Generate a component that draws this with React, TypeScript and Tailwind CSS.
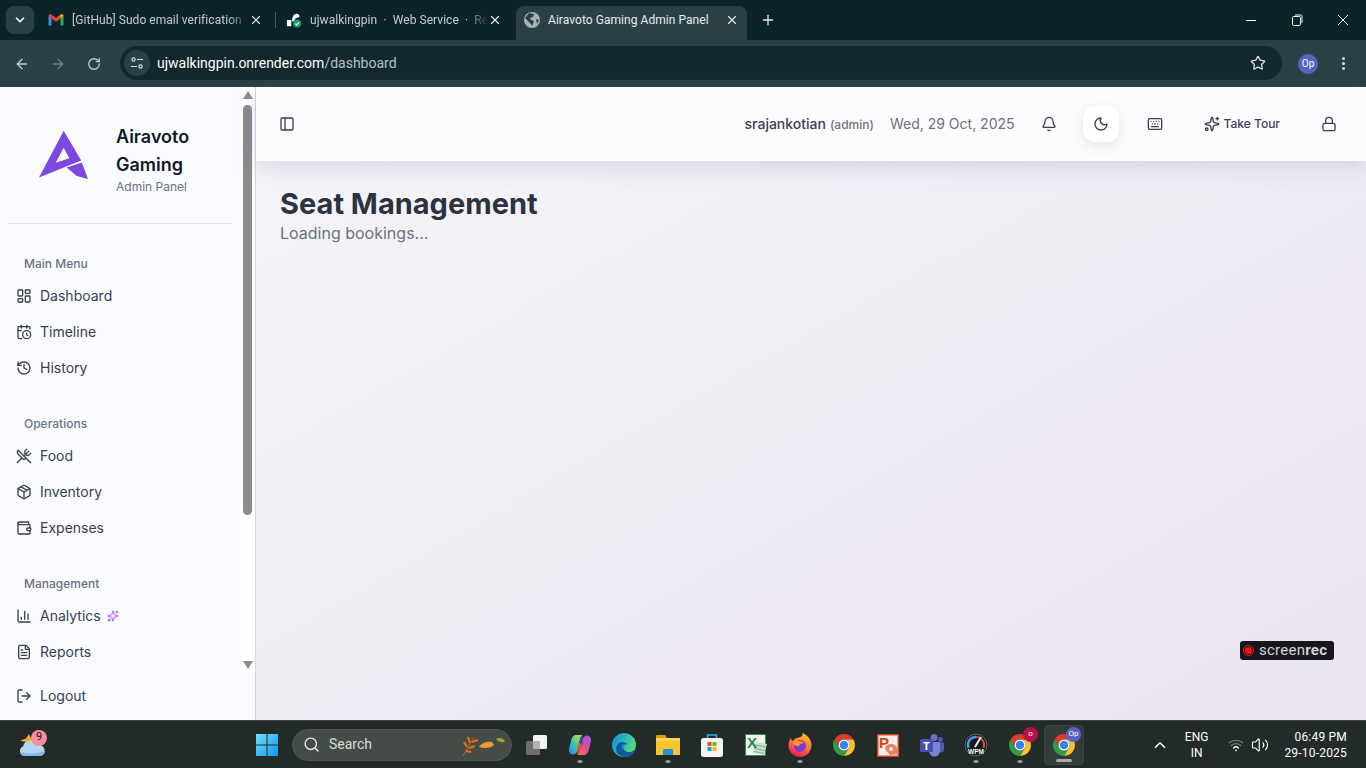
import {
  ArrowLeft,
  ArrowRight,
  Bell,
  CalendarClock,
  ChartColumn,
  ChevronDown,
  ChevronUp,
  FileText,
  History,
  Keyboard,
  LayoutDashboard,
  Lock,
  LogOut,
  Moon,
  Package,
  PanelLeft,
  Plus,
  RotateCw,
  Search,
  Sparkles,
  Star,
  UtensilsCrossed,
  Volume2,
  Wallet,
  X,
} from 'lucide-react'

const menu = [
  {
    title: 'Main Menu',
    items: [
      { icon: LayoutDashboard, label: 'Dashboard' },
      { icon: CalendarClock, label: 'Timeline' },
      { icon: History, label: 'History' },
    ],
  },
  {
    title: 'Operations',
    items: [
      { icon: UtensilsCrossed, label: 'Food' },
      { icon: Package, label: 'Inventory' },
      { icon: Wallet, label: 'Expenses' },
    ],
  },
  {
    title: 'Management',
    items: [
      { icon: ChartColumn, label: 'Analytics', badge: true },
      { icon: FileText, label: 'Reports' },
    ],
  },
]

function Logo() {
  return (
    <svg width="56" height="56" viewBox="36 127 56 56">
      <path
        d="M63.7 130.7 L81.2 160.6 L39 177.5 Z M63.7 147.7 L55.7 162.7 L69.3 158.3 Z"
        fill="#7c48e0"
        fillRule="evenodd"
      />
      <path d="M66.7 167.6 L81.8 162.6 L88 179 L76.7 176 Z" fill="#7c48e0" />
    </svg>
  )
}

function ChromeLogo({ size = 24 }: { size?: number }) {
  return (
    <svg width={size} height={size} viewBox="0 0 48 48">
      <path d="M24 13 H43 A22 22 0 0 0 5 13 L14.5 29.5 A11 11 0 0 1 24 13 Z" fill="#dc3c30" />
      <path d="M43 13 A22 22 0 0 1 24 46 L33.5 29.5 A11 11 0 0 0 24 13 Z" fill="#fbc02d" />
      <path d="M24 46 A22 22 0 0 1 5 13 L14.5 29.5 A11 11 0 0 0 33.5 29.5 Z" fill="#2f9e49" />
      <circle cx="24" cy="24" r="11" fill="#fff" />
      <circle cx="24" cy="24" r="8.5" fill="#3b82e8" />
    </svg>
  )
}

function Gmail() {
  return (
    <svg width="16" height="16" viewBox="0 0 16 16">
      <path d="M0.5 4 L0.5 13.5 L3.5 13.5 L3.5 6 Z" fill="#4285f4" />
      <path d="M15.5 4 L15.5 13.5 L12.5 13.5 L12.5 6 Z" fill="#34a853" />
      <path d="M0.5 4 C0.5 2.4 2.2 1.8 3.4 2.7 L8 6.2 L8 9.4 L0.5 4 Z" fill="#ea4335" />
      <path d="M15.5 4 C15.5 2.4 13.8 1.8 12.6 2.7 L8 6.2 L8 9.4 L15.5 4 Z" fill="#fbbc04" />
      <path d="M3.5 3 L8 6.2 L12.5 3 L12.5 6 L8 9.4 L3.5 6 Z" fill="#ea4335" />
    </svg>
  )
}

function RenderFavicon() {
  return (
    <svg width="18" height="18" viewBox="0 0 18 18">
      <path d="M1 9 h5 v7 h-5 Z" fill="#fff" />
      <path d="M7 9 C7 5 9 2 12.5 2 A3 3 0 0 1 15 6 C12 6 10 7 9.5 10 L7 11 Z" fill="#fff" />
      <circle cx="12.5" cy="13" r="4.5" fill="#12a06e" />
      <path d="M10.5 13 L12 14.6 L14.6 11.6" stroke="#fff" strokeWidth="1.4" fill="none" />
    </svg>
  )
}

function Globe() {
  return (
    <svg width="16" height="16" viewBox="0 0 16 16">
      <circle cx="8" cy="8" r="8" fill="#a9b3b6" />
      <path d="M5 1 L10 2 L9 5 L6 6 L7 8 L10 9 L8 14 L6 11 L3 8 L1 6 Z" fill="#2a4045" />
      <path d="M12 7 L15 8 L13 12 Z" fill="#2a4045" />
    </svg>
  )
}

function Copilot() {
  return (
    <svg width="24" height="24" viewBox="0 0 24 24">
      <defs>
        <linearGradient id="cpa" x1="0" y1="1" x2="1" y2="0">
          <stop offset="0" stopColor="#2f7fe8" />
          <stop offset="0.45" stopColor="#35c6c0" />
          <stop offset="0.75" stopColor="#9bd44a" />
          <stop offset="1" stopColor="#f6c93a" />
        </linearGradient>
        <linearGradient id="cpb" x1="0" y1="1" x2="1" y2="0">
          <stop offset="0" stopColor="#f08a2a" />
          <stop offset="0.5" stopColor="#e6479c" />
          <stop offset="1" stopColor="#8d5be8" />
        </linearGradient>
      </defs>
      <path d="M8 2 H15 C13 2.5 12.5 4 12 6 L9.5 17 C9 20 7 21.5 5 21.5 C2 21.5 0.5 18.5 1 16 L3.5 6 C4 4 6 2 8 2 Z" fill="url(#cpa)" />
      <path d="M16 22 H9 C11 21.5 11.5 20 12 18 L14.5 7 C15 4 17 2.5 19 2.5 C22 2.5 23.5 5.5 23 8 L20.5 18 C20 20 18 22 16 22 Z" fill="url(#cpb)" />
      <path d="M12 6 C12.5 4 13 2.5 15 2 C14 5 15 8 15.5 10 L13 15 L10.5 12 Z" fill="#2f5fc8" opacity="0.75" />
      <path d="M12 18 C11.5 20 11 21.5 9 22 C10 19 9 16 8.5 14 L11 9 L13.5 12 Z" fill="#f2603a" opacity="0.85" />
    </svg>
  )
}

function Edge() {
  return (
    <svg width="24" height="24" viewBox="0 0 24 24">
      <defs>
        <linearGradient id="ega" x1="0" y1="0.2" x2="1" y2="0.6">
          <stop offset="0" stopColor="#1a8fdc" />
          <stop offset="0.55" stopColor="#2cc0b0" />
          <stop offset="1" stopColor="#6fdc72" />
        </linearGradient>
      </defs>
      <circle cx="12" cy="12" r="12" fill="url(#ega)" />
      <path d="M24 13 C23.5 17 20 19 17 19 C13.5 19 10.5 16.5 11.5 13.5 C12 11.5 14 11 15.5 11.5 C14 8.5 9 8 6 11 C3.5 13.5 3.5 18 6 21 C9 24 14 24.5 17 23.5 C21 22 24 18 24 13 Z" fill="#12589e" />
      <path d="M15.5 11.5 C14 11 12 11.5 11.5 13.5 C11 15 11.5 16.5 13 17.5 C11.5 17 9 15 9.5 12.5 C10 10.5 13 10 15.5 11.5 Z" fill="#0d8fc8" />
    </svg>
  )
}

function Folder() {
  return (
    <svg width="24" height="24" viewBox="0 0 24 24">
      <path d="M0 3 A1 1 0 0 1 1 2 H9 L11 5 H0 Z" fill="#d99a16" />
      <path d="M0 5 H24 V21 A1 1 0 0 1 23 22 H1 A1 1 0 0 1 0 21 Z" fill="#fcd34d" />
      <path d="M0 8 H24 V21 A1 1 0 0 1 23 22 H1 A1 1 0 0 1 0 21 Z" fill="#f9c52e" />
      <path d="M7 17 A1 1 0 0 1 8 16 H16 A1 1 0 0 1 17 17 V22 H7 Z" fill="#2b8fe0" />
    </svg>
  )
}

function Store() {
  return (
    <svg width="24" height="24" viewBox="0 0 24 24">
      <path d="M7.5 5 V2 H16.5 V5" fill="none" stroke="#2bb3ee" strokeWidth="1.6" />
      <rect x="1" y="5" width="22" height="19" rx="2.5" fill="#f4f4f4" />
      <rect x="7.5" y="9" width="4" height="4" fill="#ea4f28" />
      <rect x="12.5" y="9" width="4" height="4" fill="#7cb900" />
      <rect x="7.5" y="14" width="4" height="4" fill="#00a3ee" />
      <rect x="12.5" y="14" width="4" height="4" fill="#ffb900" />
    </svg>
  )
}

function Excel() {
  return (
    <svg width="24" height="24" viewBox="0 0 24 24">
      <rect x="1" y="1" width="21" height="22" fill="#2f8a58" />
      <rect x="2" y="2" width="19" height="20" fill="#eef6ee" />
      <path d="M12 9 L23 11 L20 22 L9 20 Z" fill="#c8dfcc" />
      <path d="M11 12 L22 14 M10 15.5 L21 17.5 M9.5 18.5 L20.5 20.5" stroke="#6aa57e" strokeWidth="0.8" />
      <text x="3" y="15" fontSize="15" fontWeight="700" fill="#1f8a4c" fontFamily="Liberation Sans, sans-serif">X</text>
    </svg>
  )
}

function Firefox() {
  return (
    <svg width="24" height="24" viewBox="0 0 24 24">
      <defs>
        <linearGradient id="ffa" x1="0.7" y1="0" x2="0.3" y2="1">
          <stop offset="0" stopColor="#ffc11f" />
          <stop offset="0.5" stopColor="#ff7139" />
          <stop offset="1" stopColor="#e3185b" />
        </linearGradient>
      </defs>
      <path d="M14.5 0 C20 2.5 23.5 7 23.5 12 C23.5 18.5 18.5 24 12 24 C5.5 24 0.5 18.5 0.5 12.5 C0.5 9.5 1.5 6.5 3 5 C3.2 6.5 3.8 7.5 4.8 8 C6 6 8.5 4.8 11 4.5 C13 4.2 15 3 14.5 0 Z" fill="url(#ffa)" />
      <circle cx="12" cy="13" r="6" fill="#7a3ad0" />
      <path d="M4.5 9 C8 7 14 7.5 16.5 10.5 C14 10 11.5 11 11 13 C8 13.5 5.5 12 4.5 9 Z" fill="#ff9330" />
    </svg>
  )
}

function PowerPoint() {
  return (
    <svg width="24" height="24" viewBox="0 0 24 24">
      <rect x="1" y="1" width="22" height="23" fill="#d1481f" />
      <rect x="2.5" y="2.5" width="19" height="20" fill="#fbeee8" />
      <path d="M9 16 A6 5 0 0 1 21 16 L23 21 L14 22 Z" fill="#e8805c" />
      <circle cx="15" cy="16" r="2" fill="#fbeee8" />
      <text x="3" y="15" fontSize="15" fontWeight="700" fill="#d1481f" fontFamily="Liberation Sans, sans-serif">P</text>
    </svg>
  )
}

function Teams() {
  return (
    <svg width="24" height="24" viewBox="0 0 24 24">
      <circle cx="14" cy="4.5" r="3.5" fill="#6c70c8" />
      <circle cx="20.5" cy="6.5" r="2.5" fill="#5558af" />
      <path d="M17 9.5 H24 V16 A3.5 3.5 0 0 1 17 16 Z" fill="#5558af" />
      <path d="M9 9 H20 V18 A5.5 5.5 0 0 1 9 18 Z" fill="#7b80d8" />
      <rect x="0" y="6" width="13" height="13" rx="1.5" fill="#4b50b0" />
      <text x="3" y="16.5" fontSize="11" fontWeight="700" fill="#fff" fontFamily="Liberation Sans, sans-serif">T</text>
    </svg>
  )
}

function Wpm() {
  return (
    <svg width="24" height="24" viewBox="0 0 24 24">
      <circle cx="12" cy="12" r="12" fill="#15191b" />
      <circle cx="12" cy="12" r="11" fill="none" stroke="#6a6f72" strokeWidth="1" />
      <path d="M4.5 15 A8 8 0 0 1 12 4" fill="none" stroke="#3aa0e8" strokeWidth="2.4" />
      <path d="M12 4 A8 8 0 0 1 19.5 15" fill="none" stroke="#d0533f" strokeWidth="2" />
      <path d="M11 14 L17 4" stroke="#e8e8e8" strokeWidth="2" />
      <text x="12" y="20.5" fontSize="6.5" fontWeight="700" fill="#fff" textAnchor="middle" fontFamily="Liberation Sans, sans-serif">WPM</text>
    </svg>
  )
}

function Weather() {
  return (
    <svg width="28" height="28" viewBox="0 0 28 28">
      <path d="M11 3 L13.5 8 L18 9 L15 13 L10 14 L7.5 11 L2 9.5 L8 7.5 Z" fill="#f2a42b" />
      <path d="M6 25 A5 5 0 0 1 5 15.5 A8 8 0 0 1 20 14 A5.5 5.5 0 0 1 22 25 Z" fill="#b3d4f2" />
      <path d="M6 25 A5 5 0 0 1 2 21 C8 23 18 23 27 20 A5.5 5.5 0 0 1 22 25 Z" fill="#85b7ea" />
    </svg>
  )
}

function Leaves() {
  return (
    <svg width="46" height="24" viewBox="0 0 46 24">
      <path d="M2 23 L13 4" stroke="#c2561c" strokeWidth="1.2" />
      <path d="M6 14 L3 9 M9 10 L7 4 M8 15 L14 13 M11 9 L17 7 M5 18 L10 19" stroke="#e0701f" strokeWidth="2.2" />
      <path d="M18 14 C20 10 26 8 31 9 L33 12 C30 15 24 16 18 14 Z" fill="#f09a2e" />
      <path d="M35 6 C38 4 42 5 44 8 C42 10 38 10 35 6 Z" fill="#a8a030" />
    </svg>
  )
}

function Tab({
  icon,
  title,
  className,
  fade,
}: {
  icon: React.ReactNode
  title: string
  className: string
  fade?: boolean
}) {
  return (
    <div className={`flex items-center h-7 ${className}`}>
      <div className="w-4 flex justify-center shrink-0">{icon}</div>
      <span
        className={`ml-2 flex-1 whitespace-nowrap text-[12px] tracking-[0.05px] ${
          fade ? '[mask-image:linear-gradient(to_right,black_88%,transparent)]' : ''
        }`}
      >
        {title}
      </span>
      <X size={14} className="text-gray-200 shrink-0" />
    </div>
  )
}

function Dot({ wide }: { wide?: boolean }) {
  return <div className={`absolute bottom-[2px] left-1/2 -translate-x-1/2 h-[3px] rounded-full ${wide ? 'w-4 bg-[#a8adab]' : 'w-[5px] bg-[#8f9491]'}`} />
}

function TaskIcon({ children, dot, active }: { children: React.ReactNode; dot?: boolean; active?: boolean }) {
  return (
    <div className={`relative w-10 h-10 mx-0.5 flex items-center justify-center rounded ${active ? 'bg-[#343b38] border border-[#3c4441]' : ''}`}>
      {children}
      {dot && <Dot />}
      {active && <Dot wide />}
    </div>
  )
}

export default function App() {
  return (
    <div className="w-screen h-screen overflow-hidden flex flex-col font-['Inter',sans-serif] bg-[#f3f4f8]">
      {/* Browser chrome */}
      <div className="h-10 shrink-0 bg-[#0c2329] flex items-end font-['Roboto',sans-serif]">
        <div className="w-7 h-7 ml-1.5 mb-1.5 rounded-lg bg-[#2a4045] flex items-center justify-center">
          <ChevronDown size={14} className="text-gray-100" strokeWidth={3} />
        </div>
        <Tab
          icon={<Gmail />}
          title="[GitHub] Sudo email verification"
          fade
          className="w-[215px] ml-[14px] mb-1.5 text-[#c3cccf]"
        />
        <div className="w-px h-[16px] bg-[#46585c] mb-3 ml-[12px]" />
        <Tab
          icon={<RenderFavicon />}
          title={'ujwalkingpin\u2002·\u2002Web Service\u2002·\u2002Re'}
          fade
          className="w-[216px] ml-[10px] mb-1.5 text-[#c3cccf]"
        />
        <div className="w-[231px] h-[34px] ml-[14px] rounded-t-lg bg-[#2a4045] px-2 pb-1.5 text-[#e6ecee]">
          <Tab icon={<Globe />} title="Airavoto Gaming Admin Panel" className="" />
        </div>
        <Plus size={16} className="text-gray-200 ml-[13px] mb-3" />
        <div className="ml-auto flex items-center h-10 text-gray-100">
          <div className="w-[46px] flex justify-center">
            <div className="w-2.5 h-px bg-gray-100" />
          </div>
          <div className="w-[46px] flex justify-center">
            <svg width="12" height="12" viewBox="0 0 12 12" fill="none" stroke="currentColor">
              <rect x="1.5" y="2.5" width="8" height="9" rx="1.2" />
              <path d="M4 1 H9.5 A1.5 1.5 0 0 1 11 2.5 V9" />
            </svg>
          </div>
          <div className="w-[46px] flex justify-center">
            <svg width="12" height="12" viewBox="0 0 12 12" stroke="currentColor">
              <path d="M1 1 L11 11 M11 1 L1 11" />
            </svg>
          </div>
        </div>
      </div>
      <div className="h-[47px] shrink-0 bg-[#2a4045] flex items-center">
        <div className="w-[44px] flex justify-center">
          <ArrowLeft size={16} className="text-[#c6d0d2]" />
        </div>
        <div className="w-[27px] flex justify-center">
          <ArrowRight size={16} className="text-[#6d7f83]" />
        </div>
        <div className="w-[45px] flex justify-center">
          <RotateCw size={14} className="text-[#c6d0d2]" strokeWidth={2.2} />
        </div>
        <div className="ml-[4px] w-[1162px] h-[34px] mb-[1px] rounded-full bg-[#13282e] flex items-center font-['Roboto',sans-serif]">
          <div className="ml-[4px] w-[26px] h-[26px] rounded-full bg-[#2a4045] flex items-center justify-center">
            <svg width="14" height="14" viewBox="0 0 14 14" fill="none" stroke="#d7dfe1" strokeWidth="1.2">
              <circle cx="3.5" cy="3.5" r="1.6" />
              <path d="M7 3.5 H13 M1 10.5 H7" />
              <circle cx="10.5" cy="10.5" r="1.6" />
            </svg>
          </div>
          <span className="ml-[7px] text-[14px] text-white">
            ujwalkingpin.onrender.com<span className="text-[#b6c1c4]">/dashboard</span>
          </span>
          <Star size={16} className="ml-auto mr-[16px] text-[#d7dfe1]" />
        </div>
        <div className="ml-[16px] w-5 h-5 rounded-full bg-[#5762c4] flex items-center justify-center text-[10px] text-white font-['Roboto',sans-serif]">
          Op
        </div>
        <div className="ml-[24px] flex flex-col gap-[2px]">
          <div className="w-[3px] h-[3px] rounded-full bg-[#d7dfe1]" />
          <div className="w-[3px] h-[3px] rounded-full bg-[#d7dfe1]" />
          <div className="w-[3px] h-[3px] rounded-full bg-[#d7dfe1]" />
        </div>
      </div>

      {/* Page */}
      <div className="flex-1 min-h-0 flex">
        <aside className="w-[256px] shrink-0 bg-[#fafbfe] border-r border-[#d5d6e0] flex flex-col">
          <div className="h-[585px] flex">
            <div className="w-[240px]">
              <div className="mx-2 h-[137px] border-b border-[#e5e7eb] flex items-center pb-[2px]">
                <div className="ml-[28px] mt-[2px]">
                  <Logo />
                </div>
                <div className="ml-[24px] w-[100px] pt-[9px]">
                  <div className="text-[18px] leading-7 font-semibold text-[#111827]">Airavoto Gaming</div>
                  <div className="text-[12px] leading-4 text-[#6b7280]">Admin Panel</div>
                </div>
              </div>
              <div className="pt-8 flex flex-col gap-[30px]">
                {menu.map((group) => (
                  <div key={group.title}>
                    <div className="pl-6 text-[12px] leading-4 font-medium text-[#6b7280] mb-1.5">{group.title}</div>
                    {group.items.map(({ icon: Icon, label, badge }) => (
                      <div key={label} className="h-9 pl-4 flex items-center gap-2 text-[#374151]">
                        <Icon size={16} />
                        <span className="text-[14px] leading-5 pb-px">{label}</span>
                        {badge && <Sparkles size={12} className="text-[#a855f7] -ml-0.5" />}
                      </div>
                    ))}
                  </div>
                ))}
              </div>
            </div>
            <div className="w-[15px] bg-[#fefefe] flex flex-col items-center pt-[4px]">
              <div className="w-0 h-0 border-x-[5px] border-x-transparent border-b-[8px] border-b-[#8c8c8c]" />
              <div className="w-[9px] h-[410px] mt-[6px] rounded-full bg-[#8c8c8c]" />
              <div className="w-0 h-0 mt-[146px] border-x-[5px] border-x-transparent border-t-[8px] border-t-[#8c8c8c]" />
            </div>
          </div>
          <div className="h-9 mt-[6px] pl-4 flex items-center gap-2 text-[#374151]">
            <LogOut size={16} />
            <span className="text-[14px] leading-5 pb-px">Logout</span>
          </div>
        </aside>

        <main className="relative flex-1 min-w-0 flex flex-col bg-gradient-to-br from-[#f4f5f8] to-[#ebe4f1]">
          <header className="h-[74px] shrink-0 bg-[#fcfcfe] flex items-center pl-[23px] pr-[19px] shadow-[0_4px_24px_rgba(90,90,150,0.2)]">
            <PanelLeft size={16} className="text-[#374151]" />
            <div className="ml-auto flex items-center">
              <div className="flex items-baseline -mt-[2px]">
                <span className="text-[14px] font-medium text-[#374151]">srajankotian</span>
                <span className="ml-1 text-[12px] font-medium text-[#6b7280]">(admin)</span>
                <span className="ml-4 text-[14px] text-[#6b7280]">Wed, 29 Oct, 2025</span>
              </div>
              <div className="ml-[16px] w-9 h-9 flex items-center justify-center text-[#374151]">
                <Bell size={16} />
              </div>
              <div className="ml-4 w-9 h-9 rounded-xl bg-white shadow-[0_4px_12px_rgba(60,60,100,0.12)] flex items-center justify-center text-[#374151]">
                <Moon size={16} />
              </div>
              <div className="ml-[18px] w-9 h-9 flex items-center justify-center text-[#374151]">
                <Keyboard size={16} />
              </div>
              <div className="ml-[31px] flex items-center gap-1 text-[#374151]">
                <Sparkles size={16} />
                <span className="text-[12px] font-medium">Take Tour</span>
              </div>
              <div className="ml-[31px] w-9 h-9 flex items-center justify-center text-[#374151]">
                <Lock size={16} />
              </div>
            </div>
          </header>
          <div className="px-6 pt-[25px]">
            <h1 className="text-[29px] leading-9 font-bold text-[#2b3240]">Seat Management</h1>
            <p className="text-[16px] leading-6 text-[#6b7280] -mt-px">Loading bookings...</p>
          </div>
          <div className="absolute left-[984px] top-[554px] w-[94px] h-[19px] rounded-[3px] bg-[#16161c] flex items-center font-['Roboto',sans-serif]">
            <div className="ml-[3px] w-[11px] h-[11px] rounded-full border border-[#d8262c] flex items-center justify-center">
              <div className="w-[7px] h-[7px] rounded-full bg-[#fb0f12]" />
            </div>
            <span className="ml-[5px] text-[15px] leading-none tracking-[0.25px] text-[#d4d4d6]">
              screen<span className="font-bold">rec</span>
            </span>
          </div>
        </main>
      </div>

      {/* Windows taskbar */}
      <div className="h-[48px] shrink-0 bg-[#222b27] border-t border-[#3a413e] flex items-center font-['Roboto',sans-serif]">
        <div className="relative w-[245px] pl-[18px]">
          <Weather />
          <div className="absolute left-[31px] -top-[1px] w-[16px] h-[16px] rounded-full bg-[#f78e9c] flex items-center justify-center text-[11px] text-[#1a1a1a]">
            9
          </div>
        </div>
        <div className="w-11 flex justify-center">
          <svg width="24" height="24" viewBox="0 0 24 24">
            <defs>
              <linearGradient id="win" x1="0" y1="0" x2="1" y2="1">
                <stop offset="0" stopColor="#6fe0f5" />
                <stop offset="1" stopColor="#1295f5" />
              </linearGradient>
            </defs>
            <path d="M1 1 H11.5 V11.5 H1 Z M12.5 1 H23 V11.5 H12.5 Z M1 12.5 H11.5 V23 H1 Z M12.5 12.5 H23 V23 H12.5 Z" fill="url(#win)" />
          </svg>
        </div>
        <div className="ml-[3px] w-[220px] h-[32px] rounded-full bg-[#454c47] border border-[#50574f] flex items-center pl-[10px] pr-[4px]">
          <Search size={17} className="text-gray-200" />
          <span className="ml-[9px] text-[14px] text-[#d7dbd8]">Search</span>
          <div className="ml-auto">
            <Leaves />
          </div>
        </div>
        <div className="ml-[2px] flex items-center">
          <TaskIcon>
            <svg width="24" height="24" viewBox="0 0 24 24">
              <rect x="9" y="2" width="14" height="14" rx="1.5" fill="#f2f2f2" />
              <rect x="2" y="8" width="14" height="14" rx="1.5" fill="#6e6e6e" />
              <rect x="9" y="8" width="7" height="8" fill="#b4b4b4" />
            </svg>
          </TaskIcon>
          <TaskIcon dot><Copilot /></TaskIcon>
          <TaskIcon><Edge /></TaskIcon>
          <TaskIcon dot><Folder /></TaskIcon>
          <TaskIcon><Store /></TaskIcon>
          <TaskIcon><Excel /></TaskIcon>
          <TaskIcon dot><Firefox /></TaskIcon>
          <TaskIcon><ChromeLogo /></TaskIcon>
          <TaskIcon><PowerPoint /></TaskIcon>
          <TaskIcon><Teams /></TaskIcon>
          <TaskIcon dot><Wpm /></TaskIcon>
          <TaskIcon dot>
            <ChromeLogo />
            <div className="absolute right-[2px] top-[2px] w-[15px] h-[15px] rounded-full bg-[#b3124e] flex items-center justify-center text-[8px] text-white">
              o
            </div>
          </TaskIcon>
          <TaskIcon active>
            <ChromeLogo />
            <div className="absolute right-[2px] top-[1px] w-[15px] h-[15px] rounded-full bg-[#5762c4] flex items-center justify-center text-[8px] text-white">
              Op
            </div>
          </TaskIcon>
        </div>
        <div className="ml-auto flex items-center text-white pr-[19px]">
          <ChevronUp size={18} className="text-white" />
          <div className="ml-[16px] text-[12px] leading-[16px] text-center">
            <div>ENG</div>
            <div>IN</div>
          </div>
          <svg width="16" height="16" viewBox="0 0 24 24" fill="none" strokeWidth="2" strokeLinecap="round" className="ml-[20px]">
            <path d="M2 8.8 a15 15 0 0 1 20 0" stroke="#6f7673" />
            <path d="M5 12.9 a10 10 0 0 1 14 0" stroke="#6f7673" />
            <path d="M8.5 16.4 a5 5 0 0 1 7 0" stroke="#ffffff" />
            <circle cx="12" cy="20" r="1.4" fill="#ffffff" />
          </svg>
          <Volume2 size={18} className="ml-[7px]" strokeWidth={1.5} />
          <div className="ml-[15px] text-[12px] leading-[16px] text-right tracking-[0.2px]">
            <div>06:49 PM</div>
            <div>29-10-2025</div>
          </div>
        </div>
      </div>
    </div>
  )
}
